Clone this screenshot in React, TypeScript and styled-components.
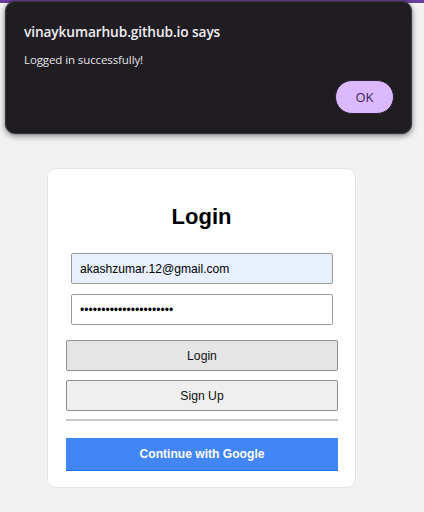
import React from "react";
import styled, { createGlobalStyle } from "styled-components";

const GlobalStyle = createGlobalStyle`
  html, body {
    margin: 0;
    padding: 0;
    background: #f2f2f2;
    font-family: "Liberation Sans", Arial, sans-serif;
  }
  #root { min-height: 512px; }
`;

const Page = styled.div`
  position: relative;
  width: 424px;
  height: 512px;
  overflow: hidden;
  background: #f2f2f2;
`;

const TopBar = styled.div`
  height: 3px;
  background: #6a3d9e;
`;

const Main = styled.main`
  padding: 165px 0 0 47px;
`;

const Card = styled.div`
  width: 309px;
  height: 320px;
  box-sizing: border-box;
  background: #ffffff;
  border: 1px solid #e4e4e4;
  border-radius: 9px;
  padding: 0 18px 0 18px;
  display: flex;
  flex-direction: column;
`;

const Title = styled.h2`
  margin: 35px 0 0 0;
  text-align: center;
  font-size: 22px;
  font-weight: 700;
  color: #000;
  line-height: 26px;
`;

const Fields = styled.div`
  margin-top: 23px;
  display: flex;
  flex-direction: column;
  gap: 10px;
  padding: 0 5px;
`;

const Input = styled.input<{ $autofill?: boolean }>`
  box-sizing: border-box;
  width: 262px;
  height: 31px;
  margin: 0;
  padding: 0 8px;
  border: 1px solid #9a9a9a;
  border-radius: 2px;
  background: ${(p) => (p.$autofill ? "#e8f0fe" : "#ffffff")};
  font-family: "Liberation Sans", Arial, sans-serif;
  font-size: 12.1px;
  color: #000;
  outline: none;
`;

const Buttons = styled.div`
  margin-top: 15px;
  display: flex;
  flex-direction: column;
  gap: 9px;
`;

const Button = styled.button<{ $bg: string }>`
  box-sizing: border-box;
  width: 272px;
  height: 31px;
  margin: 0;
  border: 1px solid #8f8f8f;
  border-radius: 2px;
  background: ${(p) => p.$bg};
  font-family: "Liberation Sans", Arial, sans-serif;
  font-size: 12.2px;
  color: #111;
  padding-top: 1px;
  cursor: pointer;
`;

const Divider = styled.hr`
  width: 272px;
  margin: 8px 0 0 0;
  border: none;
  border-top: 2px solid #c8c8c8;
  height: 0;
`;

const GoogleButton = styled.button`
  box-sizing: border-box;
  width: 272px;
  height: 33px;
  margin: 17px 0 0 0;
  border: none;
  border-bottom: 1px solid #1a73e8;
  border-radius: 0;
  background: #4285f4;
  color: #ffffff;
  font-family: "Liberation Sans", Arial, sans-serif;
  font-size: 12.1px;
  font-weight: 700;
  cursor: pointer;
`;

const Dialog = styled.div`
  position: absolute;
  left: 5px;
  top: 1px;
  width: 407px;
  height: 133px;
  box-sizing: border-box;
  background: #1f1d22;
  border: 1px solid #3a383d;
  border-radius: 10px;
  box-shadow: 0 2px 6px rgba(0, 0, 0, 0.45), 0 0 2px rgba(0, 0, 0, 0.3);
  padding: 20px 18px 0 18px;
  display: flex;
  flex-direction: column;
  font-family: "Open Sans", "Noto Sans", sans-serif;
`;

const DialogTitle = styled.div`
  font-size: 13.7px;
  font-weight: 600;
  color: #f1eff4;
  line-height: 20px;
  letter-spacing: -0.1px;
`;

const DialogMessage = styled.div`
  margin-top: 10px;
  font-size: 11.5px;
  color: #e6e4e8;
  line-height: 16px;
  letter-spacing: -0.1px;
`;

const DialogActions = styled.div`
  margin-top: 12px;
  display: flex;
  justify-content: flex-end;
`;

const OkButton = styled.button`
  width: 59px;
  height: 34px;
  box-sizing: border-box;
  border: 1px solid #2a2230;
  border-radius: 17px;
  background: #dbb8ff;
  color: #3a2658;
  font-family: "Open Sans", "Noto Sans", sans-serif;
  font-size: 13px;
  margin-right: -1px;
  cursor: pointer;
`;

export default function App() {
  return (
    <Page>
      <GlobalStyle />
      <TopBar />
      <Main>
        <Card>
          <Title>Login</Title>
          <Fields>
            <Input $autofill type="email" readOnly value="akashzumar.12@gmail.com" />
            <Input type="password" readOnly value="abcdefghijklmnopqrstuv" />
          </Fields>
          <Buttons>
            <Button $bg="#e5e5e5">Login</Button>
            <Button $bg="#efefef">Sign Up</Button>
          </Buttons>
          <Divider />
          <GoogleButton>Continue with Google</GoogleButton>
        </Card>
      </Main>
      <Dialog role="alertdialog">
        <DialogTitle>vinaykumarhub.github.io says</DialogTitle>
        <DialogMessage>Logged in successfully!</DialogMessage>
        <DialogActions>
          <OkButton>OK</OkButton>
        </DialogActions>
      </Dialog>
    </Page>
  );
}
